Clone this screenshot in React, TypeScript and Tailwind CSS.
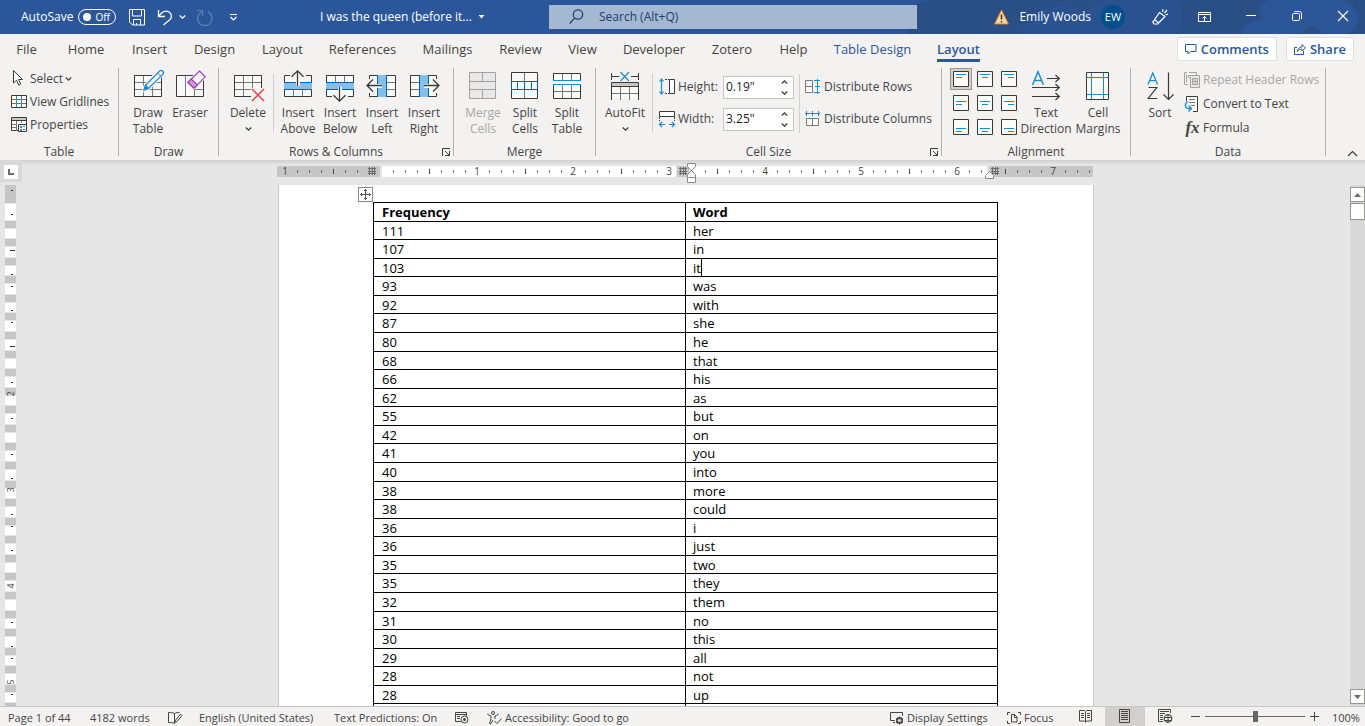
import React from "react";

type SvgProps = { w: number; h: number; children: React.ReactNode; className?: string };
function Ico({ w, h, children, className = "" }: SvgProps) {
  return (
    <svg width={w} height={h} viewBox={`0 0 ${w} ${h}`} fill="none" aria-hidden="true" className={`shrink-0 overflow-visible ${className}`}>
      {children}
    </svg>
  );
}

const INK = "#3b3a39";
const BLUE = "#1e8bcd";
const DEEP = "#0063b1";

/* ---------- large ribbon icons (32 x 32) ---------- */

const DrawTableIcon = () => (
  <Ico w={32} h={32}>
    <path d="M2.5 5.500h27v21h-27z" fill="#fafafa" stroke={INK} />
    <path d="M3 12.500h26M3 19.500h26M11.500 6v20M20.500 6v20" stroke="#797774" />
    <path d="M29.500 1.200a2.200 2.200 0 0 1 0 3.600L16.500 18 12 20l1.800-4.600L26.500 1.600a2.200 2.200 0 0 1 3-.4z" fill="#fafafa" stroke="#f3f2f1" strokeWidth="4" />
    <path d="M30.700 1.200a2.300 2.300 0 0 1 0 3.200L16.500 18.500 12 20l1.500-4.600L27.500 1.200a2.300 2.300 0 0 1 3.200 0z" fill="#fafafa" stroke={BLUE} strokeWidth="1.300" />
    <path d="M11.800 20.200l2-5 3 3z" fill={BLUE} stroke={BLUE} />
    <path d="M25.500 3l3.200 3.200" stroke={BLUE} />
  </Ico>
);

const EraserIcon = () => (
  <Ico w={32} h={32}>
    <path d="M2.500 5.500h27v21h-27z" fill="#fafafa" stroke={INK} />
    <path d="M11.500 6v20M20.500 20v6M20 19.500h9" stroke="#797774" />
    <path d="M13 12L24 0h8v8L20 20h-5z" fill="#f3f2f1" />
    <path d="M25.500 1L31.200 6.800 20 18.200 14 12.300z" fill="#fafafa" stroke="#a23fb0" strokeWidth="1.200" />
    <path d="M17.300 9L14 12.300l6 5.900L23.300 15z" fill="#d69bdd" stroke="#a23fb0" strokeWidth="1.200" />
  </Ico>
);

const DeleteIcon = () => (
  <Ico w={32} h={32}>
    <path d="M2.500 5.500h27v21h-27z" fill="#fafafa" stroke={INK} />
    <path d="M3 12.500h26M3 19.500h26M11.500 6v20M20.500 6v20" stroke="#797774" />
    <path d="M19 18h13v13H19z" fill="#f3f2f1" />
    <path d="M20 19l12 12M32 19L20 31" stroke="#e8383d" strokeWidth="1.300" />
  </Ico>
);

const InsertAboveIcon = () => (
  <Ico w={32} h={32}>
    <path d="M2.500 5.500h27v21h-27z" fill="#fafafa" stroke={INK} />
    <path d="M11.500 20v6M20.500 20v6" stroke="#797774" />
    <path d="M2 12h28v8H2z" fill="#83beec" />
    <path d="M2 12.500h28M2 19.500h28" stroke={DEEP} />
    <path d="M8 3h16v4H8z" fill="#f3f2f1" />
    <path d="M14 3h4v13h-4z" fill="#fafafa" />
    <path d="M15.500 16V.800M9.500 6.800l6-6 6 6" stroke={INK} strokeWidth="1.300" />
  </Ico>
);

const InsertBelowIcon = () => (
  <Ico w={32} h={32}>
    <path d="M2.500 5.500h27v21h-27z" fill="#fafafa" stroke={INK} />
    <path d="M11.500 6v6M20.500 6v6" stroke="#797774" />
    <path d="M2 12h28v8H2z" fill="#83beec" />
    <path d="M2 12.500h28M2 19.500h28" stroke={DEEP} />
    <path d="M8 25h16v3H8z" fill="#f3f2f1" />
    <path d="M14 17h4v13h-4z" fill="#fafafa" />
    <path d="M15.500 17v14M9.500 25.200l6 6 6-6" stroke={INK} strokeWidth="1.300" />
  </Ico>
);

const InsertLeftIcon = () => (
  <Ico w={32} h={32}>
    <path d="M3.500 5.500h26v21h-26z" fill="#fafafa" stroke={INK} />
    <path d="M20 12.500h9M20 19.500h9" stroke="#797774" />
    <path d="M11 5h10v22H11z" fill="#83beec" />
    <path d="M11.500 5v22M20.500 5v22" stroke={DEEP} />
    <path d="M0 9h6v14H0zM5 14h11v4H5z" fill="#fafafa" />
    <path d="M0 9h4v14H0z" fill="#f3f2f1" />
    <path d="M16 15.500H1M7 9.500l-6 6 6 6" stroke={INK} strokeWidth="1.300" />
  </Ico>
);

const InsertRightIcon = () => (
  <Ico w={32} h={32}>
    <path d="M2.500 5.500h26v21h-26z" fill="#fafafa" stroke={INK} />
    <path d="M3 12.500h9M3 19.500h9" stroke="#797774" />
    <path d="M11 5h10v22H11z" fill="#83beec" />
    <path d="M11.500 5v22M20.500 5v22" stroke={DEEP} />
    <path d="M25 9h7v14h-7zM16 14h11v4H16z" fill="#fafafa" />
    <path d="M28 9h4v14h-4z" fill="#f3f2f1" />
    <path d="M16 15.500h15M25 9.500l6 6-6 6" stroke={INK} strokeWidth="1.300" />
  </Ico>
);

const MergeCellsIcon = () => (
  <Ico w={32} h={32}>
    <path d="M2.500 2.500h26v26h-26z" fill="#e9e8e8" stroke="#a3a2a0" />
    <path d="M3 11.500h25M3 19.500h25M15.500 3v8M15.500 20v8" stroke="#a3a2a0" />
  </Ico>
);

const SplitCellsIcon = () => (
  <Ico w={32} h={32}>
    <path d="M2.500 2.500h26v26h-26z" fill="#fafafa" stroke={INK} />
    <path d="M15.500 3v8M15.500 20v8" stroke="#797774" />
    <path d="M2.500 11.500h26v8h-26zM8.500 12v7M15.500 12v7M22.500 12v7" fill="#fafafa" stroke={DEEP} />
  </Ico>
);

const SplitTableIcon = () => (
  <Ico w={32} h={32}>
    <path d="M2.500 10V3.500h27V10M2.500 14v14.500h27V14" fill="#fafafa" stroke={INK} />
    <path d="M11.500 4v6M20.500 4v6M11.500 15v13M20.500 15v13M3 21.500h26" stroke="#797774" />
    <path d="M2 10.500h28M2 14.500h28" stroke={BLUE} />
  </Ico>
);

const AutoFitIcon = () => (
  <Ico w={32} h={32}>
    <path d="M2.500 3v7M29.500 3v7M3 6.500h7M22 6.500h7" stroke={INK} />
    <path d="M3 16h26v13H3z" fill="#fafafa" />
    <path d="M2.500 30V12.500h27V30" stroke={INK} />
    <path d="M3 13h26v3H3z" fill="#c8c6c4" />
    <path d="M2 16.500h28" stroke={INK} />
    <path d="M11.500 17v13M20.500 17v13M3 23.500h26" stroke="#797774" />
    <path d="M11.500 2l8.500 9M20 2l-8.500 9" stroke={BLUE} strokeWidth="1.200" />
  </Ico>
);

const TextDirectionIcon = () => (
  <Ico w={32} h={32}>
    <path d="M2.500 15L8 1.800 13.500 15M4.600 10.500h6.900" stroke={BLUE} strokeWidth="1.500" />
    <path d="M17 8.500h12M25.500 5l3.800 3.500L25.500 12M2 17.500h27M25.500 14l3.800 3.500-3.800 3.500M2 26.500h27M25.500 23l3.800 3.500-3.800 3.500" stroke={INK} strokeWidth="1.200" />
  </Ico>
);

const CellMarginsIcon = () => (
  <Ico w={32} h={32}>
    <path d="M4.500 2.500h22v27h-22z" fill="#fafafa" stroke={INK} />
    <path d="M9.500 3v26M21.500 3v26M5 7.500h21M5 24.500h21" stroke={BLUE} />
  </Ico>
);

const SortIcon = () => (
  <Ico w={32} h={32}>
    <path d="M4 14.500L8.800 3l4.800 11.500M5.800 10.700h6" stroke={BLUE} strokeWidth="1.300" />
    <path d="M4.500 17.500h8.300L4.200 28.500h9" stroke={INK} strokeWidth="1.200" />
    <path d="M24.500 2.500V29M19.500 24.500l5 5 5-5" stroke={INK} strokeWidth="1.200" />
  </Ico>
);

/* ---------- small icons ---------- */

const Chevron = ({ c = INK }: { c?: string }) => (
  <Ico w={7} h={6}>
    <path d="M.800 1.500l2.700 2.700L6.200 1.500" stroke={c} strokeWidth="1.200" />
  </Ico>
);

const SelectIcon = () => (
  <Ico w={17} h={17}>
    <path d="M2.500.500v12.500l3-2.800 2.200 4.800 2-1L7.500 9.500h4z" fill="#fff" stroke={INK} />
  </Ico>
);

const GridlinesIcon = () => (
  <Ico w={17} h={17}>
    <path d="M.500 2.500h15v12H.500z" fill="#fff" stroke={INK} />
    <path d="M5.500 3v11M10.500 3v11M1 6.500h14M1 10.500h14" stroke={BLUE} />
  </Ico>
);

const PropertiesIcon = () => (
  <Ico w={17} h={17}>
    <path d="M.500 1.500h15v13H.500z" fill="#fff" stroke={INK} />
    <path d="M1 2h14v2H1z" fill="#c8c6c4" />
    <path d="M0 4.500h16" stroke={INK} />
    <path d="M5.500 5v10M1 8.500h5M1 11.500h5M10.500 5v2" stroke="#797774" />
    <path d="M7.500 8.500h8v7h-8z" fill="#fff" stroke={INK} />
    <path d="M9 10h2v2H9zM12 10h2v1h-2zM9 13h2v2H9zM12 13h2v1h-2z" fill={BLUE} />
  </Ico>
);

const HeightIcon = () => (
  <Ico w={17} h={18}>
    <path d="M2.500 1v15M.500 3.500l2-2.500 2 2.500M.500 13.500l2 2.500 2-2.500" stroke={BLUE} strokeWidth="1.200" />
    <path d="M6 1.500h4M6 15.500h4" stroke={INK} strokeDasharray="2 1" />
    <path d="M10.500 1.500h5v14h-5z" fill="#fff" stroke={INK} />
  </Ico>
);

const WidthIcon = () => (
  <Ico w={17} h={18}>
    <path d="M.500 1.500h15v5H.500z" fill="#fff" stroke={INK} />
    <path d="M.500 7v4M15.500 7v4" stroke={INK} strokeDasharray="2 1" />
    <path d="M1 14.500h5M10 14.500h5M3 12l-2.500 2.500L3 17M13 12l2.500 2.500L13 17" stroke={BLUE} strokeWidth="1.200" />
  </Ico>
);

const DistRowsIcon = () => (
  <Ico w={17} h={18}>
    <path d="M.500 2.500h7v12h-7zM1 8.500h6" fill="#fff" stroke="#797774" />
    <path d="M12.500 1v15M9 2.500h6M10 8.500h5M9 14.500h6" stroke={BLUE} />
  </Ico>
);

const DistColsIcon = () => (
  <Ico w={17} h={18}>
    <path d="M1.500 8.500h12v7h-12zM7.500 9v6" fill="#fff" stroke="#797774" />
    <path d="M0 3.500h15M1.500 1v5M7.500 1v5M13.500 1v5" stroke={BLUE} />
  </Ico>
);

const RepeatIcon = () => (
  <Ico w={17} h={18}>
    <path d="M3 1.500H.500v12H4M2.500 3.500v8" stroke="#a3a2a0" />
    <path d="M12.500 4V1.500H5" stroke="#a3a2a0" />
    <path d="M4.500 4.500h11v12h-9v-10h-2z" fill="#e9e8e8" stroke="#a3a2a0" />
    <path d="M8.500 7.500h5v6h-5zM11 8v5M8 10.500h6" stroke="#a3a2a0" />
  </Ico>
);

const ConvertIcon = () => (
  <Ico w={17} h={18}>
    <path d="M2.500 6V1.500h11v15H9" fill="#fff" stroke={INK} />
    <path d="M5 4.500h6M5 7.500h6M7 10.500h4" stroke="#797774" />
    <path d="M4 6.500C.500 8 .200 13.500 4.500 13.500H7M4.500 10.500l3 3-3 3" stroke={BLUE} strokeWidth="1.300" />
  </Ico>
);

/* ---------- ribbon building blocks ---------- */

function BigButton({ icon, lines, chevron, disabled, width = "w-[42px]" }: { icon: React.ReactNode; lines: string[]; chevron?: boolean; disabled?: boolean; width?: string }) {
  return (
    <button disabled={disabled} className={`flex shrink-0 flex-col items-center pt-[2px] leading-4 ${width} ${disabled ? "text-[#a9a7a5]" : ""}`}>
      {icon}
      <span className="h-[3px]" />
      {lines.map((l) => (
        <span key={l} className="whitespace-nowrap">{l}</span>
      ))}
      {chevron && <span className="flex h-4 items-center"><Chevron /></span>}
    </button>
  );
}

function SmallButton({ icon, label, chevron, disabled, height }: { icon: React.ReactNode; label: string; chevron?: boolean; disabled?: boolean; height: string }) {
  return (
    <button disabled={disabled} className={`flex items-center gap-[2px] whitespace-nowrap ${height} ${disabled ? "text-[#a9a7a5]" : ""}`}>
      {icon}
      <span>{label}</span>
      {chevron && <Chevron />}
    </button>
  );
}

function Group({ label, width, launcher, children }: { label: string; width: string; launcher?: boolean; children: React.ReactNode }) {
  return (
    <section aria-label={label} className={`relative flex h-[88px] shrink-0 flex-col border-r border-[#b5b3b1] ${width}`}>
      <div className="flex h-[76px] shrink-0 px-2">{children}</div>
      <div className="text-center leading-4">{label}</div>
      {launcher && (
        <button aria-label={`${label} settings`} className="absolute right-[3px] bottom-0">
          <Ico w={8} h={8}>
            <path d="M.500 8V.500H8M3 3l4 4M7.500 3v4.500H3" stroke={INK} />
          </Ico>
        </button>
      )}
    </section>
  );
}

const Divider = () => <div className="mt-[6px] h-[59px] w-px shrink-0 bg-[#d2d0ce]" />;

function Spin({ id, icon, label, value }: { id: string; icon: React.ReactNode; label: string; value: string }) {
  return (
    <div className="flex h-8 items-center">
      {icon}
      <label htmlFor={id} className="w-[47px] pl-[2px]">{label}</label>
      <div className="flex h-[23px] w-[71px] items-center border border-[#c8c6c4] bg-white pr-[5px]">
        <input id={id} defaultValue={value} className="w-full min-w-0 bg-transparent pl-[2px] text-[#201f1e] outline-none" />
        <div className="flex flex-col gap-[5px]">
          <button aria-label={`Increase ${label}`} className="rotate-180"><Chevron /></button>
          <button aria-label={`Decrease ${label}`}><Chevron /></button>
        </div>
      </div>
    </div>
  );
}

const ALIGN = ["top left", "top center", "top right", "center left", "center", "center right", "bottom left", "bottom center", "bottom right"];

function AlignIcon({ i }: { i: number }) {
  const y = [3.5, 6.5, 9.5][Math.floor(i / 3)];
  const col = i % 3;
  const a = 3;
  const b = [3, 5, 7][col];
  return (
    <Ico w={16} h={16}>
      <path d="M.5.500h15v15H.500z" fill="#fafafa" stroke={INK} />
      <path d={`M${a} ${y}h10M${b} ${y + 3}h6`} stroke={BLUE} />
    </Ico>
  );
}

/* ---------- data ---------- */

const TABS: [string, string][] = [
  ["File", "w-[53px]"], ["Home", "w-[66px]"], ["Insert", "w-[61px]"], ["Design", "w-[69px]"], ["Layout", "w-[67px]"],
  ["References", "w-[93px]"], ["Mailings", "w-[77px]"], ["Review", "w-[69px]"], ["View", "w-[55px]"], ["Developer", "w-[88px]"],
  ["Zotero", "w-[68px]"], ["Help", "w-[55px]"],
];

const ROWS: [string, string][] = [
  ["111", "her"], ["107", "in"], ["103", "it"], ["93", "was"], ["92", "with"], ["87", "she"], ["80", "he"], ["68", "that"],
  ["66", "his"], ["62", "as"], ["55", "but"], ["42", "on"], ["41", "you"], ["40", "into"], ["38", "more"], ["38", "could"],
  ["36", "i"], ["36", "just"], ["35", "two"], ["35", "they"], ["32", "them"], ["31", "no"], ["30", "this"], ["29", "all"],
  ["28", "not"], ["28", "up"], ["", ""],
];

const rowHeight = (i: number) => ([1, 3, 5].includes(i % 7) ? "h-[18px]" : "h-[19px]");
const rowTop = (i: number) => Math.round((i * 130) / 7);

/* ---------- rulers ---------- */

const Hash = ({ x }: { x: number }) => (
  <path d={`M${x + 1.5} 1v8M${x + 4.500} 1v8M${x + 6.500} 1v8M${x} 2.500h8M${x} 5.500h8M${x} 7.500h8`} stroke="#6b6b6b" />
);

function HorizontalRuler() {
  const ticks = [];
  for (let k = -7; k <= 59; k++) {
    if (k === 0 || k === 25 || k === 26 || k === -1 || k === 51) continue;
    const x = 105 + k * 12;
    if (k % 8 === 0) {
      ticks.push(<text key={k} x={x - 1} y={14} textAnchor="middle" fontSize="10" fill="#444">{Math.abs(k / 8)}</text>);
    } else if (x < 816) {
      const half = k % 4 === 0;
      ticks.push(<path key={k} d={half ? `M${x - 0.5} 8v5` : `M${x - 0.5} 9.500v2`} stroke="#444" />);
    }
  }
  return (
    <svg width={816} height={22} viewBox="0 0 816 22" fill="none" className="shrink-0" aria-label="Horizontal ruler">
      <path d="M0 5h816v11H0z" fill="#fff" />
      <path d="M0 5h103v11H0zM400 5h12v11h-12zM712 5h104v11H712z" fill="#c6c6c6" />
      <path d="M103 5h2v11h-2zM399 5h1v11h-1zM710 5h2v11h-2z" fill="#e6e6e6" />
      {ticks}
      <text x={8} y={14} textAnchor="middle" fontSize="10" fill="#444">1</text>
      <g transform="translate(0 5)"><Hash x={91} /><Hash x={402} /><Hash x={714} /></g>
      <path d="M410.500 2.500h8v3l-4 4.500-4-4.500zM410.500 16.500v-3l4-4 4 4v3zM410.500 16.500h8v5h-8z" fill="#fff" stroke="#8a8a8a" />
      <path d="M708.500 17.500v-3l4-4 4 4v3z" fill="#fff" stroke="#8a8a8a" />
    </svg>
  );
}

function VerticalRuler() {
  const ticks = [];
  const numbers = [];
  for (let k = -1; k < 43; k++) {
    if (k === 0) continue;
    const y = 17 + k * 12;
    if (k % 8 === 0) {
      if (k > 8) {
        numbers.push(<text key={k} transform={`translate(14 ${y}) rotate(-90)`} textAnchor="middle" fontSize="9" fill="#444">{k / 8}</text>);
      }
    } else {
      ticks.push(<path key={k} d={k % 4 === 0 ? `M10 ${y + 0.5}h5` : `M11 ${y + 0.5}h2`} stroke="#333" />);
    }
  }
  return (
    <svg width={22} height={522} viewBox="0 0 22 522" fill="none" aria-label="Vertical ruler" className="block">
      <path d="M5 0h11v522H5z" fill="#fff" />
      <path d="M5 0h11v18H5z" fill="#c6c6c6" />
      <path d="M5 18h11v1H5z" fill="#e6e6e6" />
      {ticks}
      {ROWS.map((_, i) => (
        <g key={i}>
          <path d={`M5 ${16 + rowTop(i + 1)}h11v9H5z`} fill="#e6e6e6" />
          <path d={`M5 ${17 + rowTop(i + 1)}h11v7H5z`} fill="#c6c6c6" />
        </g>
      ))}
      {numbers}
    </svg>
  );
}

/* ---------- sections ---------- */

function TitleBar() {
  return (
    <header className="relative flex h-[34px] shrink-0 items-center overflow-hidden bg-[#2b579a] text-[12px] text-white">
      <svg width={465} height={34} viewBox="0 0 465 34" fill="none" aria-hidden="true" className="absolute top-0 right-0">
        <path d="M8 34C0 18 10 2 30 0h435v34z" fill="#2a4f87" />
        <path d="M120 34c6-16 24-30 44-28 10 1 16 4 22 8 8-12 18-16 28-14h60c12 8 12 22 0 34z" fill="#2a5190" />
        <path d="M342 34c2-10 10-14 22-14-8-8-4-20 8-20h64c14 0 22 8 22 18s-6 16-16 16z" fill="#2b5698" />
        <circle cx="412" cy="36" r="10" fill="#2a4f87" />
      </svg>
      <div className="relative flex w-[320px] shrink-0 items-center pl-[21px]">
        <span className="w-[57px]">AutoSave</span>
        <button role="switch" aria-checked="false" aria-label="AutoSave" className="flex h-4 w-[38px] items-center justify-between rounded-full border border-white pr-[5px] pl-[4px] text-[10px] leading-3">
          <span className="size-2 rounded-full bg-white" />Off
        </button>
        <button aria-label="Save" className="ml-[13px]">
          <Ico w={16} h={16}>
            <path d="M.500.500h15v15.500h-12l-3-3zM3.500 1v6h9V1M4.500 16v-5.500h7V16M7.500 14v2" stroke="#fff" />
          </Ico>
        </button>
        <button aria-label="Undo" className="ml-3">
          <Ico w={16} h={16}>
            <path d="M1.500 1v6.500H8M1.800 7.200C5 2.500 9 1 12 3s3 5.500 1 7.500L6.500 16" stroke="#fff" strokeWidth="1.300" />
          </Ico>
        </button>
        <button aria-label="Undo options" className="ml-[6px]"><Chevron c="#fff" /></button>
        <button aria-label="Redo" className="ml-[10px]">
          <Ico w={17} h={16}>
            <path d="M1 1.500h5.500V7M6.300 2.500A7.300 7.300 0 1 0 12 2.800" stroke="#5d81b8" strokeWidth="1.200" />
          </Ico>
        </button>
        <button aria-label="Customize toolbar" className="ml-4">
          <Ico w={9} h={8}>
            <path d="M1 1.500h7M1.500 4l3 3 3-3" stroke="#fff" strokeWidth="1.200" />
          </Ico>
        </button>
      </div>
      <button className="relative flex w-[229px] shrink-0 items-center gap-[6px] whitespace-nowrap">
        I was the queen (before it...
        <Ico w={7} h={4}><path d="M.500 0h6L3.500 3.500z" fill="#fff" /></Ico>
      </button>
      <label className="relative flex h-6 w-[368px] shrink-0 items-center gap-[15px] bg-[#a5b8d1] pl-5">
        <Ico w={15} h={16}>
          <path d="M5.500 9.200L.700 14.500" stroke="#1e3c6e" strokeWidth="1.200" />
          <circle cx="9" cy="5.500" r="4.700" stroke="#1e3c6e" strokeWidth="1.200" />
        </Ico>
        <input aria-label="Search" placeholder="Search (Alt+Q)" className="w-full bg-transparent outline-none placeholder:text-[#1e3c6e]" />
      </label>
      <div className="relative ml-auto flex shrink-0 items-center pr-[17px]">
        <Ico w={15} h={16} className="mr-[10px]">
          <path d="M7.500 1l7 14H.500z" fill="#fbd9a0" stroke="#e07a1f" />
          <path d="M7.500 5.500v5M7.500 12v1.500" stroke="#333" strokeWidth="1.500" />
        </Ico>
        <span className="whitespace-nowrap">Emily Woods</span>
        <span className="ml-[10px] flex size-6 items-center justify-center rounded-full bg-[#024f8c] text-[11px]">EW</span>
        <button aria-label="Coming soon" className="ml-[27px]">
          <Ico w={16} h={16}>
            <path d="M7.500 3.500l5.500 4L5.500 15H2L.800 13.200zM2.500 10.500l4 3.500" stroke="#fff" strokeWidth="1.200" strokeLinejoin="round" />
            <path d="M10.500 3l.500-3M12.500 4l2.500-3M13.500 6l2.500-1" stroke="#fff" strokeWidth="1.200" />
          </Ico>
        </button>
        <button aria-label="Ribbon display options" className="ml-[30px]">
          <Ico w={13} h={12}>
            <path d="M.500 1.500h12v9H.500zM1 3.500h11M6.500 10V5.500M4.500 7.500l2-2 2 2" stroke="#fff" />
          </Ico>
        </button>
        <button aria-label="Minimize" className="ml-[35px]"><Ico w={10} h={10}><path d="M0 3.500h10" stroke="#fff" /></Ico></button>
        <button aria-label="Restore" className="ml-9">
          <Ico w={10} h={12}>
            <rect x=".5" y="2.500" width="7" height="7" rx="1" stroke="#fff" />
            <path d="M2.500 .500h5a2 2 0 0 1 2 2V8" stroke="#fff" />
          </Ico>
        </button>
        <button aria-label="Close" className="ml-9"><Ico w={10} h={12}><path d="M0 0l10 10M10 0L0 10" stroke="#fff" strokeWidth="1.100" /></Ico></button>
      </div>
    </header>
  );
}

function Tabs() {
  return (
    <nav className="flex h-[34px] shrink-0 items-start bg-[#f3f2f1] text-[13px] leading-[20px] text-[#444]">
      {TABS.map(([t, w], i) => (
        <button key={i} className={`mt-[5px] shrink-0 text-center whitespace-nowrap ${w}`}>{t}</button>
      ))}
      <button className="mt-[5px] w-[103px] shrink-0 whitespace-nowrap text-[#2b579a]">Table Design</button>
      <button className="mt-[5px] flex w-[69px] shrink-0 justify-center font-semibold text-[#2b579a]">
        <span className="border-b-[3px] border-[#2b579a]">Layout</span>
      </button>
      <div className="mt-[3px] ml-auto flex gap-[9px] pr-[11px] font-semibold text-[#2b579a]">
        <button className="flex h-6 items-center gap-1 rounded-xs border border-[#e1dfdd] bg-white px-[7px]">
          <Ico w={12} h={12}><path d="M.500 1.500h10.500v7H5.500L3 11V8.500H.500z" stroke="#2b579a" /></Ico>
          Comments
        </button>
        <button className="flex h-6 items-center gap-1 rounded-xs border border-[#e1dfdd] bg-white px-[7px]">
          <Ico w={12} h={12}><path d="M3 4.500H.500v7h9V8M3.500 8.500c.500-3 2-4.500 4.500-4.500V1.500L11.500 5 8 8V6C6 6 4.500 7 3.500 8.500z" stroke="#2b579a" /></Ico>
          Share
        </button>
      </div>
    </nav>
  );
}

function Ribbon() {
  return (
    <div className="flex h-[92px] shrink-0 bg-[#f3f2f1] text-[12px] text-[#444]">
      <Group label="Table" width="w-[119px]">
        <div className="-mt-px pl-[3px]">
          <SmallButton height="h-[23px]" icon={<SelectIcon />} label="Select" chevron />
          <SmallButton height="h-[23px]" icon={<GridlinesIcon />} label="View Gridlines" />
          <SmallButton height="h-[23px]" icon={<PropertiesIcon />} label="Properties" />
        </div>
      </Group>
      <Group label="Draw" width="w-[100px]">
        <BigButton icon={<DrawTableIcon />} lines={["Draw", "Table"]} />
        <BigButton icon={<EraserIcon />} lines={["Eraser"]} />
      </Group>
      <Group label="Rows & Columns" width="w-[235px]" launcher>
        <BigButton icon={<DeleteIcon />} lines={["Delete"]} chevron />
        <div className="flex w-[9px] justify-center"><Divider /></div>
        <BigButton icon={<InsertAboveIcon />} lines={["Insert", "Above"]} />
        <BigButton icon={<InsertBelowIcon />} lines={["Insert", "Below"]} />
        <BigButton icon={<InsertLeftIcon />} lines={["Insert", "Left"]} />
        <BigButton icon={<InsertRightIcon />} lines={["Insert", "Right"]} />
      </Group>
      <Group label="Merge" width="w-[142px]">
        <BigButton icon={<MergeCellsIcon />} lines={["Merge", "Cells"]} disabled />
        <BigButton icon={<SplitCellsIcon />} lines={["Split", "Cells"]} />
        <BigButton icon={<SplitTableIcon />} lines={["Split", "Table"]} />
      </Group>
      <Group label="Cell Size" width="w-[346px]" launcher>
        <BigButton icon={<AutoFitIcon />} lines={["AutoFit"]} chevron />
        <div className="flex w-[13px] shrink-0 justify-center"><Divider /></div>
        <div className="shrink-0 pt-[3px]">
          <Spin id="cell-height" icon={<HeightIcon />} label="Height:" value={'0.19"'} />
          <Spin id="cell-width" icon={<WidthIcon />} label="Width:" value={'3.25"'} />
        </div>
        <div className="flex w-[11px] shrink-0 justify-center"><Divider /></div>
        <div className="pt-[3px]">
          <SmallButton height="h-8" icon={<DistRowsIcon />} label="Distribute Rows" />
          <SmallButton height="h-8" icon={<DistColsIcon />} label="Distribute Columns" />
        </div>
      </Group>
      <Group label="Alignment" width="w-[189px]">
        <div className="-mt-px -ml-px grid h-[72px] w-[72px] shrink-0 grid-cols-3">
          {ALIGN.map((name, i) => (
            <button key={name} aria-label={`Align ${name}`} className={`flex size-[22px] items-center justify-center self-center justify-self-center ${i === 0 ? "border border-[#979593] bg-[#d2d0ce]" : ""}`}>
              <AlignIcon i={i} />
            </button>
          ))}
        </div>
        <BigButton icon={<TextDirectionIcon />} lines={["Text", "Direction"]} width="w-[50px]" />
        <BigButton icon={<CellMarginsIcon />} lines={["Cell", "Margins"]} width="w-[54px]" />
      </Group>
      <Group label="Data" width="w-[195px]">
        <BigButton icon={<SortIcon />} lines={["Sort"]} />
        <div className="pl-[3px]">
          <SmallButton height="h-6" icon={<RepeatIcon />} label="Repeat Header Rows" disabled />
          <SmallButton height="h-6" icon={<ConvertIcon />} label="Convert to Text" />
          <SmallButton
            height="h-6"
            icon={<span className="w-[17px] text-center font-['Liberation_Serif',serif] text-[17px] leading-4 font-bold italic">fx</span>}
            label="Formula"
          />
        </div>
      </Group>
      <button aria-label="Collapse the ribbon" className="mr-[7px] mb-[3px] ml-auto self-end">
        <Ico w={11} h={7}><path d="M1 6l4.500-4.500L10 6" stroke={INK} strokeWidth="1.200" /></Ico>
      </button>
    </div>
  );
}

function ScrollButton({ down }: { down?: boolean }) {
  return (
    <button aria-label={down ? "Scroll down" : "Scroll up"} className="flex h-[15px] w-full shrink-0 items-center justify-center border border-[#979593] bg-[#fdfdfd]">
      <Ico w={7} h={4}><path d={down ? "M0 0h7L3.500 4z" : "M0 4h7L3.500 0z"} fill="#6b6b6b" /></Ico>
    </button>
  );
}

function Workspace() {
  return (
    <main className="flex min-h-0 flex-1 flex-col bg-[#e6e6e6]">
      <div className="h-[5px] shrink-0 bg-linear-to-b from-[#cfcfcf] to-[#e6e6e6]" />
      <div className="-mt-[5px] flex h-[25px] shrink-0">
        <div className="h-[22px] w-[22px] shrink-0 bg-[#d9d9d9] pt-[5px] pl-1">
          <button aria-label="Tab selector" className="flex size-[14px] items-center justify-center bg-white">
            <Ico w={6} h={6}><path d="M1 0v5h5" stroke="#6b6b6b" strokeWidth="2" /></Ico>
          </button>
        </div>
        <div className="flex flex-1 justify-center pt-[1px] pr-[2px]"><HorizontalRuler /></div>
        <div className="w-[15px] shrink-0" />
      </div>
      <div className="flex min-h-0 flex-1">
        <div className="w-[22px] shrink-0 overflow-hidden"><VerticalRuler /></div>
        <div className="flex min-w-0 flex-1 justify-center overflow-hidden">
          <article className="relative w-[816px] shrink-0 border-x border-[#c6c6c6] bg-white pt-[17px] pl-[94px] text-[13px] text-black">
            <button aria-label="Move table" className="absolute top-[2px] left-[79px] flex size-[15px] items-center justify-center border border-[#8a8a8a] bg-white">
              <Ico w={11} h={11}>
                <path d="M5.500 0v11M0 5.500h11M4 2l1.500-1.500L7 2M4 9l1.500 1.500L7 9M2 4L.500 5.500 2 7M9 4l1.500 1.500L9 7" stroke="#555" />
              </Ico>
            </button>
            <table className="w-[625px] table-fixed border-collapse border border-black leading-4">
              <thead>
                <tr className="h-[19px]">
                  <th className="border border-black p-0 pl-2 text-left font-bold">Frequency</th>
                  <th className="border border-black p-0 pl-[7px] text-left font-bold">Word</th>
                </tr>
              </thead>
              <tbody>
                {ROWS.map(([n, w], i) => (
                  <tr key={i} className={rowHeight(i + 1)}>
                    <td className="border border-black p-0 pl-2">{n}</td>
                    <td className="border border-black p-0 pl-[7px]">
                      <span className={w === "it" ? "border-r border-black" : ""}>{w}</span>
                    </td>
                  </tr>
                ))}
              </tbody>
            </table>
          </article>
        </div>
        <div className="flex w-[15px] shrink-0 flex-col bg-[#d9d9d9] pt-[2px] pb-[2px]">
          <ScrollButton />
          <div className="mt-[1px] h-[17px] border border-[#979593] bg-white" />
          <div className="flex-1" />
          <ScrollButton down />
        </div>
      </div>
    </main>
  );
}

const S = "#444";

function StatusBar() {
  return (
    <footer className="flex h-5 shrink-0 items-center border-t border-[#c6c6c6] bg-[#f3f2f1] text-[11px] leading-[17px] whitespace-nowrap text-[#444]">
      <span className="w-[90px] pt-[2px] pl-2">Page 1 of 44</span>
      <span className="w-[78px] pt-[2px]">4182 words</span>
      <button aria-label="Proofing" className="w-[31px] pt-[2px]">
        <Ico w={15} h={14}>
          <path d="M6.500 2v10.500M6.500 2.500C5 1.500 3 1.500.500 1.500v10c2.500 0 4.500 0 6 1.200M6.500 2.500C8 1.500 10 1.500 11.500 1.500M12.500 3l1.500 1.500-5 6-2 .800.500-2z" stroke={S} />
        </Ico>
      </button>
      <button className="w-[135px] pt-[2px] text-left">English (United States)</button>
      <span className="w-[120px] pt-[2px]">Text Predictions: On</span>
      <button aria-label="Macro recording" className="w-[33px] pt-[2px]">
        <Ico w={15} h={13}>
          <path d="M7 10.500H1.500v-9h11V5M1 3.500h12M3 5.500h3M3 7.500h3" stroke={S} />
          <circle cx="10.500" cy="8.500" r="3.500" stroke={S} /><circle cx="10.500" cy="8.500" r="1.500" fill={S} />
        </Ico>
      </button>
      <button className="flex items-center gap-[3px] pt-[2px]">
        <Ico w={15} h={14}>
          <circle cx="6" cy="2" r="1.500" stroke={S} />
          <path d="M1 2.500c-.800 1 .500 2 3 2.500v3L2.500 12.500h1.500L6 9M11 2.500c.800 1-.500 2-3 2.500v3M7.500 10l2.500 2.500 4.500-5" stroke={S} />
        </Ico>
        Accessibility: Good to go
      </button>
      <div className="ml-auto flex h-full items-center">
        <button className="flex w-[117px] items-center gap-[3px] pt-[2px]">
          <Ico w={14} h={13}>
            <path d="M5 9.500H.500v-8h12V5M3 11.500h2" stroke={S} />
            <circle cx="9.500" cy="9.500" r="2.800" stroke={S} strokeWidth="1.500" /><path d="M9.500 5.500v8M6 7.500l7 4M13 7.500l-7 4" stroke={S} />
            <circle cx="9.500" cy="9.500" r="1.200" fill="#f3f2f1" />
          </Ico>
          Display Settings
        </button>
        <button className="flex w-[64px] items-center gap-[3px] pt-[2px]">
          <Ico w={14} h={13}>
            <path d="M3 1.500H.500V4M11 1.500h2.500V4M3 12.500H.500V10M11 12.500h2.500V10M4.500 3.500h3l2.500 2.500v5H4.500zM7.500 3.500v3H10" stroke={S} />
          </Ico>
          Focus
        </button>
        <button aria-label="Read mode" className="flex w-[34px] justify-center pr-[6px]">
          <Ico w={13} h={13}>
            <path d="M6.500 1.500v11M.500.500h5l1 1 1-1h5v10.500h-5l-1 1-1-1h-5zM2 3.500h3M2 5.500h3M2 7.500h3M8 3.500h3M8 5.500h3M8 7.500h3" stroke={S} />
          </Ico>
        </button>
        <button aria-label="Print layout" className="flex h-full w-10 items-center justify-center bg-[#d2d0ce]">
          <Ico w={12} h={13}>
            <path d="M.500-.500h10v13H.500zM2 1.500h7M2 3.500h7M2 5.500h7M2 7.500h7M2 9.500h7" stroke={S} />
          </Ico>
        </button>
        <button aria-label="Web layout" className="flex w-[40px] justify-center">
          <Ico w={14} h={13}>
            <path d="M5 11.500H.500V-.500h12V3M2 1.500h9M2 3.500h5M2 5.500h3M2 7.500h3M2 9.500h3" stroke={S} />
            <circle cx="10" cy="8.500" r="3.800" stroke={S} strokeWidth="1.200" /><path d="M10 5v7M6 7.500h8M6 10.500h8" stroke={S} />
          </Ico>
        </button>
        <button aria-label="Zoom out" className="ml-[6px]"><Ico w={9} h={9}><path d="M0 4.500h9" stroke={S} /></Ico></button>
        <input
          type="range"
          aria-label="Zoom"
          defaultValue={50}
          className="mx-[5px] h-[11px] w-[100px] appearance-none bg-[linear-gradient(#666,#666)] bg-[length:100%_1px] bg-center bg-no-repeat [&::-webkit-slider-thumb]:h-[11px] [&::-webkit-slider-thumb]:w-[5px] [&::-webkit-slider-thumb]:appearance-none [&::-webkit-slider-thumb]:bg-[#666]"
        />
        <button aria-label="Zoom in"><Ico w={9} h={9}><path d="M0 4.500h9M4.500 0v9" stroke={S} /></Ico></button>
        <span className="w-[46px] pt-[2px] pl-[13px]">100%</span>
      </div>
    </footer>
  );
}

export default function App() {
  return (
    <div className="flex h-screen w-full flex-col overflow-hidden font-['Open_Sans','Noto_Sans',sans-serif]">
      <TitleBar />
      <Tabs />
      <Ribbon />
      <Workspace />
      <StatusBar />
    </div>
  );
}
